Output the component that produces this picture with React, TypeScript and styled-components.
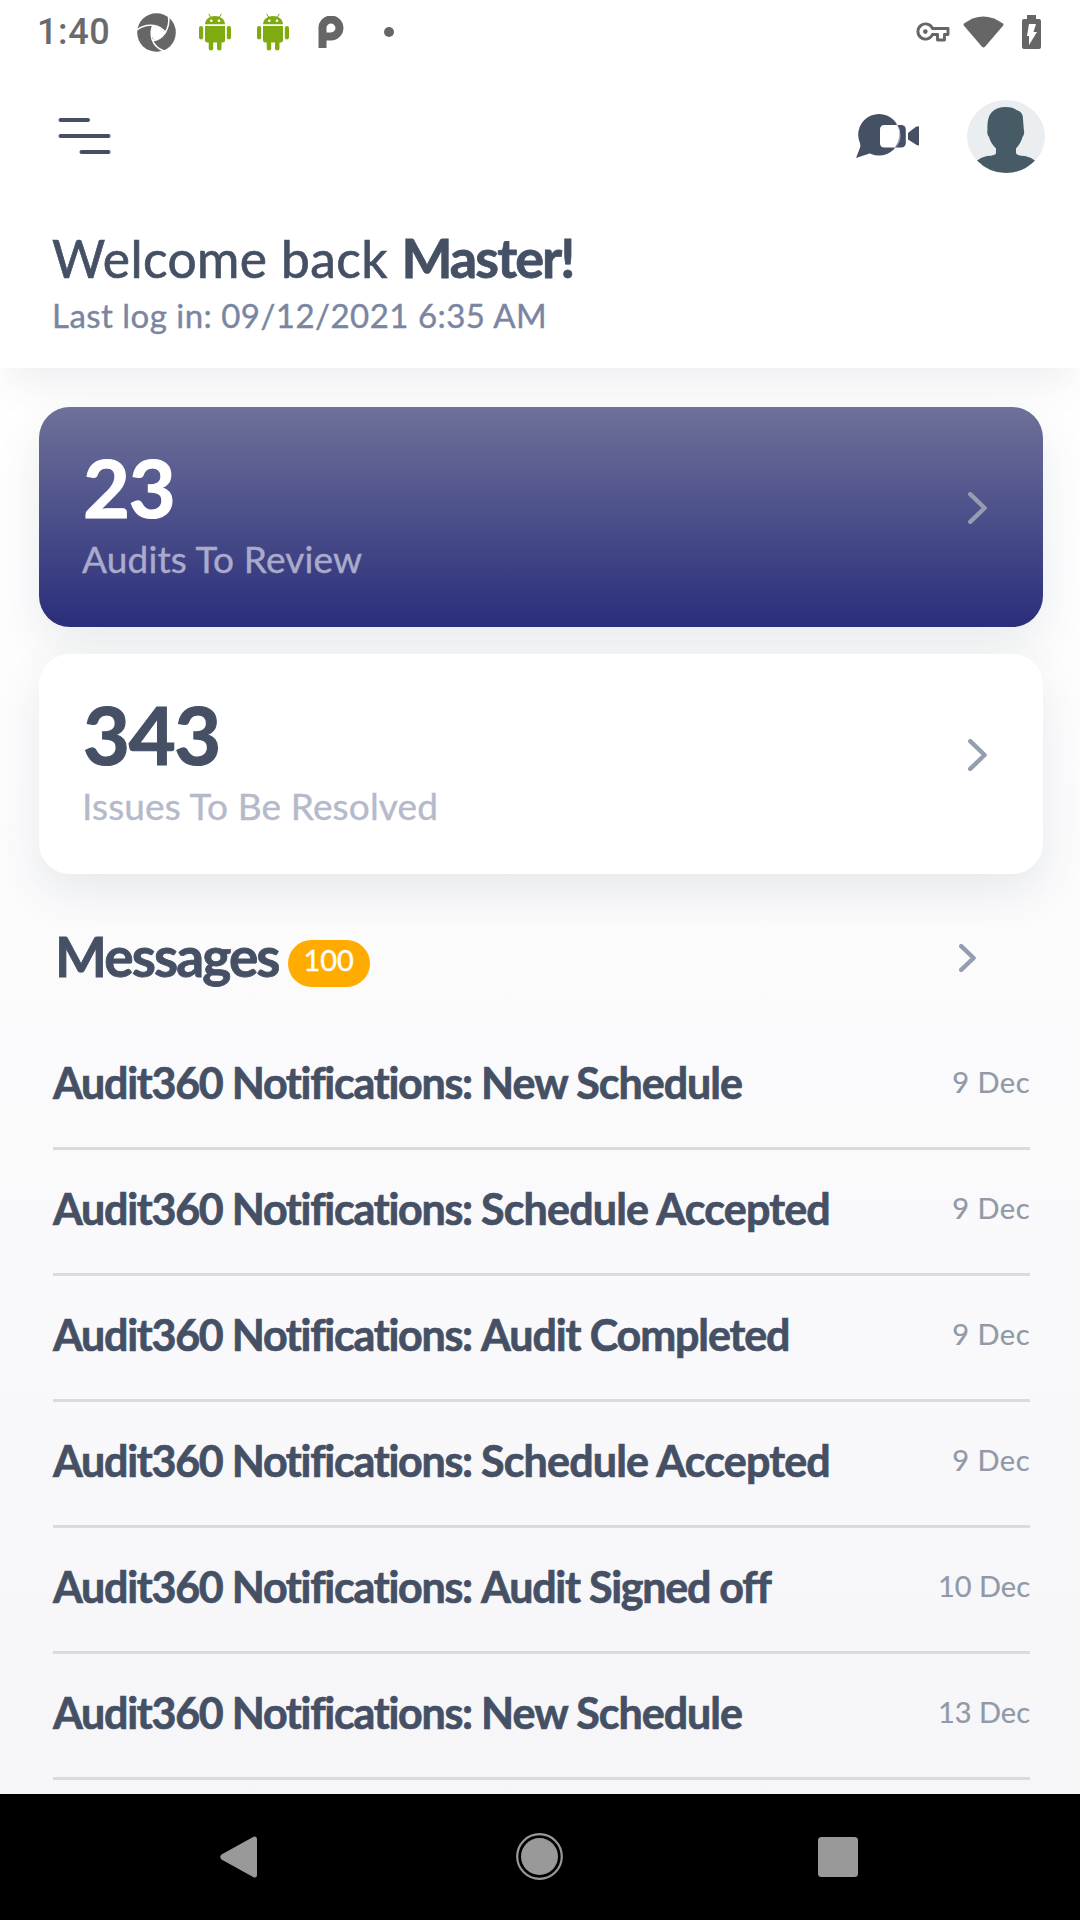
import React from "react";
import styled, { createGlobalStyle } from "styled-components";

const Global = createGlobalStyle`
  * { box-sizing: border-box; }
  body { margin: 0; background: #fff; }
`;

const Screen = styled.div`
  width: 1080px;
  height: 1920px;
  overflow: hidden;
  display: flex;
  flex-direction: column;
  font-family: Lato, "Liberation Sans", sans-serif;
  color: #455065;
  background: linear-gradient(180deg, #ffffff 368px, #f6f6f9 1794px);
`;

const Header = styled.header`
  height: 368px;
  flex: none;
  background: #fff;
  box-shadow: 0 22px 40px -10px rgba(55, 70, 85, 0.1);
`;

const StatusBar = styled.div`
  height: 64px;
  padding: 0 39px 0 37px;
  display: flex;
  justify-content: space-between;
  align-items: flex-start;
`;

const StatusGroup = styled.div`
  display: flex;
  align-items: center;
  height: 64px;
`;

const Clock = styled.span`
  width: 100px;
  font: 500 36px/68px Roboto, sans-serif;
  letter-spacing: 0.6px;
  color: #6a6a6a;
`;

const Glyph = styled.svg<{ $gap?: number }>`
  display: block;
  flex: none;
  margin-left: ${(p) => p.$gap ?? 0}px;
`;

const TopBar = styled.div`
  height: 144px;
  padding: 0 35px 0 57px;
  display: flex;
  align-items: center;
  justify-content: space-between;
`;

const Actions = styled.div`
  display: flex;
  align-items: center;
`;

const Greeting = styled.div`
  padding: 18px 52px 0;
`;

const Line = styled.div<{ $h: number; $indent?: number }>`
  height: ${(p) => p.$h}px;
  line-height: ${(p) => p.$h}px;
  padding-left: ${(p) => p.$indent ?? 0}px;
  white-space: pre;
`;

const Text = styled.span<{ $size: number; $track?: number; $color?: string; $bold?: boolean; $stroke?: number }>`
  font-size: ${(p) => p.$size}px;
  letter-spacing: ${(p) => p.$track ?? 0}px;
  color: ${(p) => p.$color ?? "#455065"};
  font-weight: ${(p) => (p.$bold ? 700 : 400)};
  -webkit-text-stroke: ${(p) => p.$stroke ?? 0.4}px currentColor;
  white-space: pre;
`;

const Content = styled.main`
  flex: 1;
  min-height: 0;
  padding-top: 39px;
  overflow: hidden;
  display: flex;
  flex-direction: column;
`;

const Card = styled.section<{ $primary?: boolean }>`
  flex: none;
  height: 220px;
  margin: 0 37px 27px 39px;
  padding: 34px 56px 0 43px;
  display: flex;
  justify-content: space-between;
  border-radius: 31px;
  background: ${(p) => (p.$primary ? "linear-gradient(180deg, #6e7198 0%, #2a2e7b 100%)" : "#fff")};
  box-shadow: 0 18px 46px rgba(50, 65, 80, 0.1);
`;

const ChevronBox = styled.div<{ $top: number }>`
  padding-top: ${(p) => p.$top}px;
`;

const MessagesHead = styled.div`
  flex: none;
  height: 84px;
  margin-top: 15px;
  padding: 0 104px 0 55px;
  display: flex;
  justify-content: space-between;
`;

const TitleWrap = styled.div`
  display: flex;
  align-items: flex-start;
`;

const Badge = styled.div`
  width: 82px;
  height: 47px;
  margin: 24px 0 0 9px;
  border-radius: 24px;
  background: #ffab00;
  text-align: center;
  line-height: 39px;
`;

const List = styled.ul`
  list-style: none;
  margin: 24px 50px 0 53px;
  padding: 0;
`;

const Row = styled.li`
  height: 126px;
  padding-bottom: 6px;
  border-bottom: 3px solid #dadbdd;
  display: flex;
  align-items: center;
  justify-content: space-between;
`;

const When = styled.div`
  padding-bottom: 2px;
`;

const NavBar = styled.nav`
  height: 126px;
  flex: none;
  padding: 0 222px 0 220px;
  background: #000;
  display: flex;
  align-items: center;
  justify-content: space-between;
`;

const Chevron = ({ w, h }: { w: number; h: number }) => (
  <Glyph width={w} height={h} viewBox={`0 0 ${w} ${h}`} fill="none">
    <path d={`M2.2 2.2L${w - 2.4} ${h / 2}L2.2 ${h - 2.2}`} stroke="#959db0" strokeWidth="4.4" strokeLinecap="round" strokeLinejoin="round" />
  </Glyph>
);

const Shutter = () => (
  <Glyph width="39" height="39" viewBox="0 0 39 39">
    <circle cx="19.5" cy="19.5" r="19.3" fill="#666" />
    <path d="M15.5 12.5Q23 13 28 20Q23 26.5 17 27.5Q12.5 20 15.5 12.5Z" fill="#fff" />
    <g fill="none" stroke="#fff" strokeWidth="1.6">
      <path d="M0 17Q7 11 17 12.5Q25 14 28.5 20" />
      <path d="M31.5 3Q33 12 28 20Q23 27 16 27.5" />
      <path d="M27 38Q18 35 15 26Q13 18 16 12.5" />
    </g>
  </Glyph>
);

const Robot = ({ gap }: { gap: number }) => (
  <Glyph $gap={gap} width="32" height="38" viewBox="0 0 32 38" fill="#80ab10">
    <path d="M6 11.2C6.4 6 10.5 3 16 3S25.6 6 26 11.2Z" />
    <path d="M9.5 .8L12 4.5M22.5 .8L20 4.5" stroke="#80ab10" strokeWidth="1" />
    <circle cx="12.3" cy="7.8" r="1.3" fill="#fff" />
    <circle cx="20" cy="7.8" r="1.3" fill="#fff" />
    <path d="M6 13H26V27Q26 29.5 23.5 29.5H8.5Q6 29.5 6 27Z" />
    <rect x="0" y="13" width="4.2" height="13.5" rx="2.1" />
    <rect x="27.8" y="13" width="4.2" height="13.5" rx="2.1" />
    <rect x="9.7" y="24" width="4.5" height="13.5" rx="2.2" />
    <rect x="18" y="24" width="4.5" height="13.5" rx="2.2" />
  </Glyph>
);

const messages = [
  { kind: "New Schedule", date: "9 Dec", track: -1 },
  { kind: "Schedule Accepted", date: "9 Dec", track: -0.83 },
  { kind: "Audit Completed", date: "9 Dec", track: -1.12 },
  { kind: "Schedule Accepted", date: "9 Dec", track: -0.83 },
  { kind: "Audit Signed off", date: "10 Dec", track: -1.25 },
  { kind: "New Schedule", date: "13 Dec", track: -1 },
];

export default function App() {
  return (
    <Screen>
      <Global />
      <Header>
        <StatusBar>
          <StatusGroup>
            <Clock>1:40</Clock>
            <Shutter />
            <Robot gap={23} />
            <Robot gap={26} />
            <Glyph $gap={29} width="26" height="32" viewBox="0 0 26 32" fill="none">
              <path d="M4.5 32V13A8.5 8.5 0 1 1 13 20.5H8" stroke="#666" strokeWidth="8" />
            </Glyph>
            <Glyph $gap={40} width="10" height="10" viewBox="0 0 10 10">
              <circle cx="5" cy="5" r="5" fill="#666" />
            </Glyph>
          </StatusGroup>
          <StatusGroup>
            <Glyph width="34" height="20" viewBox="0 0 34 20" fill="none" stroke="#666" strokeWidth="2.9">
              <path d="M16.5 6.5H32V12.5H28.5V18H21.5V12.5H16.5A7.6 7.6 0 1 1 16.5 6.5Z" strokeLinejoin="round" />
              <circle cx="9.3" cy="9.6" r="2.3" fill="#666" stroke="none" />
            </Glyph>
            <Glyph $gap={13} width="41" height="32" viewBox="0 0 41 32">
              <path d="M1 7.5Q20 -6.5 40 7.5Q41 8.5 40 9.7L22 30.8Q20.5 32.3 19 30.8L1 9.7Q0 8.5 1 7.5Z" fill="#666" />
            </Glyph>
            <Glyph $gap={18} width="19" height="34" viewBox="0 0 19 34">
              <path d="M5 0H14V4H17Q19 4 19 6V32Q19 34 17 34H2Q0 34 0 32V6Q0 4 2 4H5Z" fill="#666" />
              <path d="M7 9H14L11.5 17H15L7 30V21H5Z" fill="#fff" />
            </Glyph>
          </StatusGroup>
        </StatusBar>
        <TopBar>
          <Glyph width="55" height="38" viewBox="0 0 55 38" stroke="#455065" strokeWidth="4" strokeLinecap="round">
            <path d="M3.5 3H31M3.5 19H51.5M24.5 35H51.5" />
          </Glyph>
          <Actions>
            <Glyph width="64" height="46" viewBox="0 0 64 46" fill="#455065">
              <circle cx="23" cy="21.8" r="20.8" />
              <path d="M4 29Q5 33 3.5 36L0 45L13.500 40.500L16 34Z" />
              <rect x="30" y="12" width="19.8" height="22.5" rx="4.5" />
              <path d="M41.5 12Q47 23 39 34.5H28.5Q24 34.5 24 30V16.5Q24 12 28.5 12Z" fill="#fff" />
              <path d="M40.5 11.5Q44 15 44 22.5Q44 30 38.5 35" fill="none" stroke="#c9cdd5" strokeWidth="0.8" />
              <path d="M52 20L59.5 14Q61 13.2 63 13.2V32.5Q61 32.5 59.5 31.3L52 26.5Z" />
            </Glyph>
            <Glyph $gap={47} width="78" height="73" viewBox="0 0 78 73">
              <ellipse cx="39" cy="36.5" rx="39" ry="36.5" fill="#eaeef1" />
              <path d="M10 60.5Q14 57 20 56Q29 55.5 29 53V48.5Q23.5 43 22 37Q19.5 34 20.5 29.5Q19 7 39 7Q46 7 49.5 10Q56 11.5 56 19L56.8 29.5Q58 34 55.5 37Q54 43 49 48.5V53Q49 55.5 58 56Q64 57 68 60.5Q56 73 39 73T10 60.5Z" fill="#465b66" />
            </Glyph>
          </Actions>
        </TopBar>
        <Greeting>
          <Line $h={64}>
            <Text $size={51.5} $track={0.4} $stroke={0.7}>Welcome back </Text>
            <Text $size={54} $bold $track={-1.9} $stroke={0.8}>Master!</Text>
          </Line>
          <Line $h={50}>
            <Text $size={33} $track={0.48} $color="#7a86a1">Last log in: 09/12/2021 6:35 AM</Text>
          </Line>
        </Greeting>
      </Header>
      <Content>
        <Card $primary>
          <div>
            <Line $h={92} $indent={1}><Text $size={81} $bold $color="#fff" $track={-1.2} $stroke={1.2}>23</Text></Line>
            <Line $h={52}><Text $size={37} $track={0.15} $color="#aaabcb">Audits To Review</Text></Line>
          </div>
          <ChevronBox $top={51}><Chevron w={19} h={32} /></ChevronBox>
        </Card>
        <Card>
          <div>
            <Line $h={92} $indent={1}><Text $size={81} $bold $track={-1.3} $stroke={1.2}>343</Text></Line>
            <Line $h={52}><Text $size={37} $track={0.15} $color="#b5bacb">Issues To Be Resolved</Text></Line>
          </div>
          <ChevronBox $top={51}><Chevron w={19} h={32} /></ChevronBox>
        </Card>
        <MessagesHead>
          <TitleWrap>
            <Line $h={81}><Text $size={55} $bold $track={-1.9} $stroke={0.8}>Messages</Text></Line>
            <Badge><Text $size={29} $color="#fff">100</Text></Badge>
          </TitleWrap>
          <ChevronBox $top={28}><Chevron w={17} h={28} /></ChevronBox>
        </MessagesHead>
        <List>
          {messages.map((m, i) => (
            <Row key={i}>
              <div>
                <Text $size={43} $bold $track={-1.28} $stroke={0.7}>Audit360 Notifications: </Text>
                <Text $size={43} $bold $track={m.track} $stroke={0.7}>{m.kind}</Text>
              </div>
              <When>
                <Text $size={29} $track={m.date.length > 5 ? 0 : 0.5} $color="#9199a8" $stroke={0.2}>{m.date}</Text>
              </When>
            </Row>
          ))}
        </List>
      </Content>
      <NavBar>
        <Glyph width="37" height="42" viewBox="0 0 37 42">
          <path d="M34 .5L1.5 18.5Q-1 21 1.5 23.5L34 41.5Q37 42 37 39V3Q37 0 34 .5Z" fill="#999" />
        </Glyph>
        <Glyph width="50" height="48" viewBox="0 0 50 48">
          <circle cx="26.5" cy="23.5" r="22.3" fill="none" stroke="#999" strokeWidth="2.2" />
          <circle cx="26.5" cy="23.5" r="18.5" fill="#999" />
        </Glyph>
        <Glyph width="40" height="40" viewBox="0 0 40 40">
          <rect width="40" height="40" rx="3.5" fill="#999" />
        </Glyph>
      </NavBar>
    </Screen>
  );
}
